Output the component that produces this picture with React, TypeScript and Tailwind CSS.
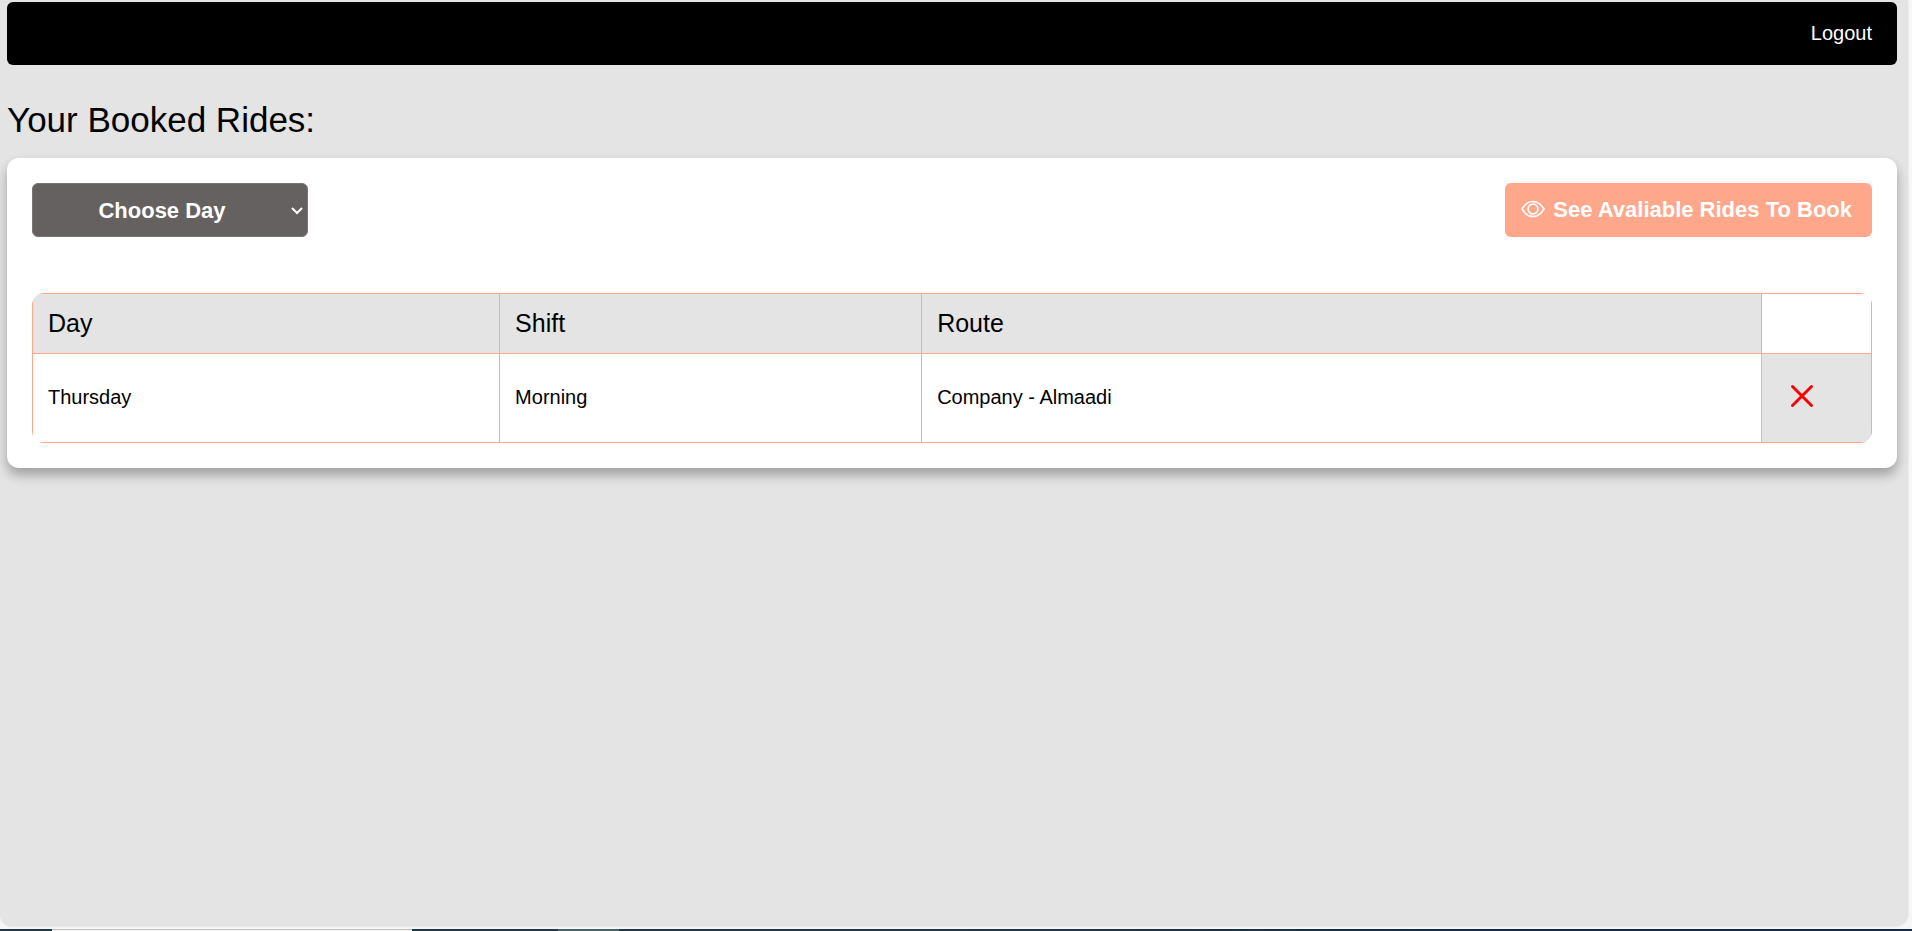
const rides = [{ day: "Thursday", shift: "Morning", route: "Company - Almaadi" }];
const days = ["Sunday", "Monday", "Tuesday", "Wednesday", "Thursday"];

function EyeIcon() {
  return (
    <svg viewBox="0 0 24 24" className="size-6" fill="none" stroke="currentColor" strokeWidth="1.7" aria-hidden="true">
      <path d="M1 12C4 7 7.6 4.5 12 4.5S20 7 23 12C20 17 16.4 19.5 12 19.5S4 17 1 12Z" strokeLinejoin="round" />
      <circle cx="12" cy="12" r="4.9" />
    </svg>
  );
}

function CrossIcon() {
  return (
    <svg viewBox="0 0 24 24" className="size-6" fill="none" stroke="currentColor" strokeWidth="3" strokeLinecap="round" aria-hidden="true">
      <path d="M2.5 2.5 21.5 21.5M21.5 2.5 2.5 21.5" />
    </svg>
  );
}

function NavBar() {
  return (
    <nav className="flex h-[63px] items-center justify-end rounded-md bg-black px-[25px] pb-0.5">
      <a href="#logout" className="text-xl text-white">
        Logout
      </a>
    </nav>
  );
}

function Toolbar() {
  return (
    <div className="flex items-center justify-between">
      <div className="relative">
        <select
          aria-label="Choose Day"
          className="h-[54px] w-[276px] appearance-none rounded-md border border-[#767676] bg-[#666161] pr-4 text-center text-[22px] font-bold text-white"
        >
          <option>Choose Day</option>
          {days.map((day) => (
            <option key={day}>{day}</option>
          ))}
        </select>
        <svg
          viewBox="0 0 12 8"
          className="pointer-events-none absolute top-6 right-[5px] h-2 w-3"
          fill="none"
          stroke="white"
          strokeWidth="2"
          aria-hidden="true"
        >
          <path d="M1 1 6 6 11 1" />
        </svg>
      </div>
      <button
        type="button"
        className="flex h-[54px] items-center gap-2 rounded-md bg-[#ffa78a] pr-5 pb-0.5 pl-4 text-[22px] font-bold text-white"
      >
        <EyeIcon />
        See Avaliable Rides To Book
      </button>
    </div>
  );
}

const headCell = "border border-[#ffa78a] px-[15px] font-normal";
const bodyCell = "border border-[#ffa78a] px-[15px] pb-0.5";

function RidesTable() {
  return (
    <div className="mt-14 overflow-hidden rounded-xl">
      <table className="w-full table-fixed border-collapse text-left">
        <colgroup>
          <col className="w-[25.4%]" />
          <col className="w-[22.95%]" />
          <col className="w-[45.65%]" />
          <col />
        </colgroup>
        <thead>
          <tr className="h-[60px] bg-[#e4e4e4] text-[25px]">
            <th className={headCell}>Day</th>
            <th className={headCell}>Shift</th>
            <th className={headCell}>Route</th>
            <td className="border border-[#ffa78a] bg-white" />
          </tr>
        </thead>
        <tbody>
          {rides.map((ride) => (
            <tr key={ride.day} className="h-[89px] text-xl">
              <td className={bodyCell}>{ride.day}</td>
              <td className={bodyCell}>{ride.shift}</td>
              <td className={bodyCell}>{ride.route}</td>
              <td className="border border-[#ffa78a] bg-[#e4e4e4] px-7 pb-1">
                <button type="button" aria-label="Cancel ride" className="block text-[#ff0000]">
                  <CrossIcon />
                </button>
              </td>
            </tr>
          ))}
        </tbody>
      </table>
    </div>
  );
}

export default function App() {
  return (
    <div className="flex min-h-screen flex-col bg-[#f7f7f7] font-['Liberation_Sans',Arial,sans-serif] text-black">
      <main className="mr-1 mb-1 grow rounded-b-xl bg-[#e4e4e4] pt-0.5 pr-[11px] pl-[7px] shadow-sm">
        <NavBar />
        <h1 className="mt-8 mb-4 text-[35px] leading-[45px]">Your Booked Rides:</h1>
        <section className="rounded-xl bg-white p-[25px] shadow-[0_7px_12px_rgba(0,0,0,0.3)]">
          <Toolbar />
          <RidesTable />
        </section>
      </main>
      <footer className="flex h-0.5 bg-linear-to-r from-[#1f3843] from-50% to-[#16264a] to-80%">
        <div className="ml-[52px] w-[360px] border-t border-[#c0c4c0] bg-[#f3f3f3]" />
        <div className="ml-[146px] w-[61px] bg-[#496068]" />
      </footer>
    </div>
  );
}
